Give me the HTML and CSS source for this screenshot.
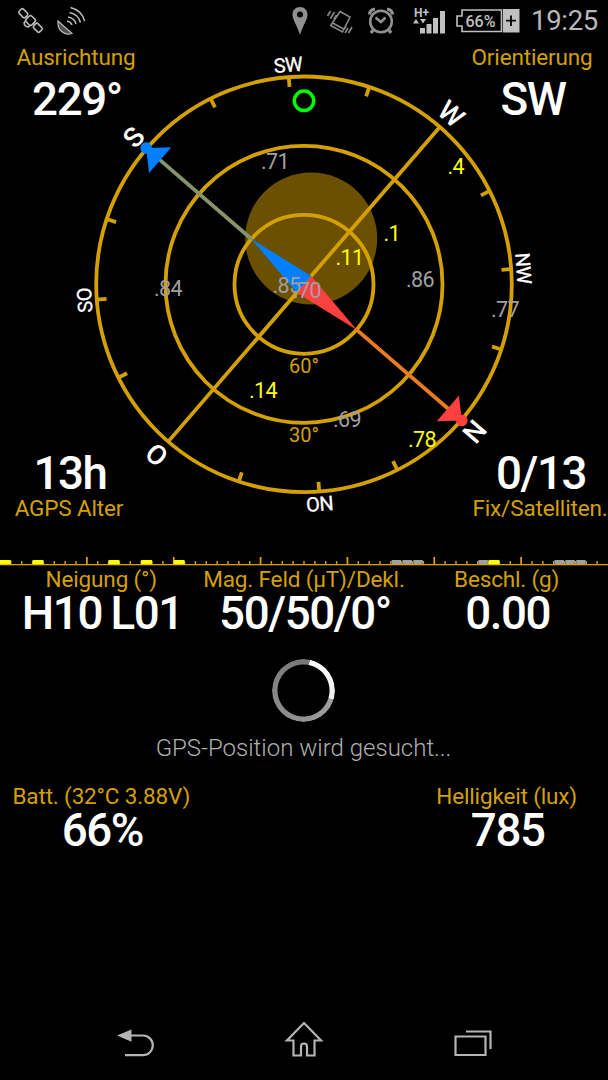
FILE: index.html
```html
<!DOCTYPE html>
<html lang="de">
<head>
    <meta charset="UTF-8">
    <meta name="viewport" content="width=device-width, initial-scale=1.0">
    <title>GPS Status</title>
    <link rel="stylesheet" href="styles.css">
</head>
<body>
    <div class="screen">
        <header class="status-bar">
            <div class="status-left">
                <svg class="line-icon" width="26" height="26" viewBox="0 0 26 26">
                    <g transform="translate(12.500 12.500) rotate(45)">
                        <rect x="-14.500" y="-3" width="8.500" height="6" rx="1.5"/>
                        <rect x="6" y="-3" width="8.500" height="6" rx="1.5"/>
                        <rect x="-4" y="-4" width="8" height="8" rx="2"/>
                        <path d="M-6 0h2M4 0h2M-3 4v2q3 3 6 0v-2"/>
                    </g>
                </svg>
                <svg class="line-icon" width="30" height="30" viewBox="0 0 30 30">
                    <path class="dish" d="M2 15L16 27.500C8 30 1 24 2 15z"/>
                    <path d="M11 15q4 1 5 4M12 11q6.500 1 8 7M13.500 6.500q9 2 11 10M14.500 1.500q11.500 3 14 13.500"/>
                </svg>
            </div>
            <div class="status-right">
                <svg width="16" height="28" viewBox="0 0 16 28">
                    <path class="pin" fill-rule="evenodd" d="M8 0C3.500 0 .5 3.300 .5 7.500C.5 13 5 18 8 28C11 18 15.500 13 15.500 7.500C15.500 3.300 12.500 0 8 0zM8 4.500a3 3 0 1 1 0 6a3 3 0 1 1 0-6z"/>
                </svg>
                <svg class="line-icon dim" width="26" height="26" viewBox="0 0 26 26">
                    <path d="M13 3.500L23 9L15.500 24L3.700 17.500zM5.200 14.800L17 21.200M.5 8L3.500 3M3.500 10.500L7.500 4M6.800 11.500L9.500 7M18 25L21 20M21.500 25L25 19M17.500 21L19 18"/>
                </svg>
                <svg class="alarm" width="28" height="28" viewBox="0 0 28 28">
                    <circle cx="14" cy="14.500" r="10.800"/>
                    <path d="M8.500 10.500L14 15L18.500 10.500"/>
                    <path class="alarm-heavy" d="M2.500 7.500Q3 2.500 8 2M25.500 7.500Q25 2.500 20 2M6 23L4 26M22 23L24 26"/>
                </svg>
                <svg class="signal" width="33" height="28" viewBox="0 0 33 28">
                    <text x="1" y="9.500" textLength="15">H+</text>
                    <path d="M0 16.500L3 12L6 16.500zM7 12H13L10 16.500zM7 21h5v5.500H7zM13.500 17h5v9.500h-5zM20 11h5v15.500h-5zM27 4h5v22.500h-5z"/>
                </svg>
                <svg class="battery" width="66" height="26" viewBox="0 0 66 26">
                    <path class="battery-case" d="M7 2H46.500V23.500H7V18H2V8H7z"/>
                    <rect x="48" y="1" width="16.500" height="23.500"/>
                    <path class="battery-plus" d="M51 12.700h10M56 7.500v10.500"/>
                    <text x="10.500" y="19" textLength="30">66%</text>
                </svg>
                <span class="clock">19:25</span>
            </div>
        </header>

        <main class="content">
            <section class="compass">
                <svg class="dial" width="608" height="512" viewBox="0 44 608 512">
                    <circle class="level-bubble" cx="311.200" cy="238.500" r="66"/>
                    <g transform="translate(304 284.300)">
                        <g class="rings">
                            <circle r="69.500"/>
                            <circle r="138.500"/>
                            <circle r="207.800"/>
                        </g>
                        <circle class="target" cy="-183.500" r="9.700"/>
                        <!-- heading 229, so north sits at 131 degrees -->
                        <g transform="rotate(130.800)">
                            <path class="rings" d="M-207.500 0H207.500"/>
                            <g class="rings" id="ticks"></g>
                            <path class="beam-north" d="M0 -69V-192"/>
                            <path class="beam-south" d="M0 69V192"/>
                            <path class="north" d="M-11 0L0 -70L11 0zM0 -208.500L-17 -190H17z"/>
                            <circle class="north" cy="-208.500" r="5.800"/>
                            <path class="south" d="M-11 0L0 70L11 0zM0 208.500L-17 190H17z"/>
                            <circle class="south" cy="208.500" r="5.800"/>
                            <g class="cardinals">
                                <text y="-215.500">N</text>
                                <text y="-215.500" transform="rotate(90)">O</text>
                                <text y="-215.500" transform="rotate(180)">S</text>
                                <text y="-215.500" transform="rotate(270)">W</text>
                            </g>
                            <g class="intercardinals">
                                <text y="-213" transform="rotate(45)">NO</text>
                                <text y="-213" transform="rotate(135)">SO</text>
                                <text y="-213" transform="rotate(225)">SW</text>
                                <text y="-213" transform="rotate(315)">NW</text>
                            </g>
                        </g>
                    </g>
                    <g class="elevations">
                        <text x="304" y="373">60°</text>
                        <text x="304" y="442">30°</text>
                    </g>
                    <g class="satellites">
                        <text x="261" y="169">.71</text>
                        <text x="154" y="295.500">.84</text>
                        <text x="406" y="286.500">.86</text>
                        <text x="272.500" y="292.500">.85</text>
                        <text x="293" y="298">.70</text>
                        <text x="491" y="317">.77</text>
                        <text x="333" y="427">.69</text>
                        <g class="used">
                            <text x="447.500" y="174">.4</text>
                            <text x="383.500" y="241">.1</text>
                            <text x="335.500" y="264.500">.11</text>
                            <text x="249" y="398">.14</text>
                            <text x="408" y="447">.78</text>
                        </g>
                    </g>
                </svg>
                <div class="corner top-left">
                    <span class="label">Ausrichtung</span>
                    <span class="value">229°</span>
                </div>
                <div class="corner top-right">
                    <span class="label">Orientierung</span>
                    <span class="value">SW</span>
                </div>
                <div class="corner bottom-left">
                    <span class="value">13h</span>
                    <span class="label">AGPS Alter</span>
                </div>
                <div class="corner bottom-right">
                    <span class="value">0/13</span>
                    <span class="label">Fix/Satelliten.</span>
                </div>
            </section>

            <svg class="sat-scale" id="satScale" width="608" height="10" viewBox="0 0 608 10"></svg>

            <section class="readings">
                <div class="reading">
                    <span class="label">Neigung (°)</span>
                    <span class="value">H10 L01</span>
                </div>
                <div class="reading">
                    <span class="label">Mag. Feld (μT)/Dekl.</span>
                    <span class="value">50/50/0°</span>
                </div>
                <div class="reading">
                    <span class="label">Beschl. (g)</span>
                    <span class="value">0.00</span>
                </div>
            </section>

            <section class="searching">
                <div class="spinner"></div>
                <p>GPS-Position wird gesucht...</p>
            </section>

            <section class="readings">
                <div class="reading">
                    <span class="label">Batt. (32°C 3.88V)</span>
                    <span class="value">66%</span>
                </div>
                <div class="reading"></div>
                <div class="reading">
                    <span class="label">Helligkeit (lux)</span>
                    <span class="value">785</span>
                </div>
            </section>
        </main>

        <nav class="nav-bar">
            <svg width="40" height="36" viewBox="0 0 40 36">
                <path class="nav-fill" d="M2 12.500L16.500 6.500V18.700z"/>
                <path d="M16 12.500H28a9.800 9.800 0 0 1 0 19.600H10"/>
            </svg>
            <svg width="40" height="38" viewBox="0 0 40 38">
                <path d="M20 1L3 18.500H9.500V33.500H17V24.500a3 3 0 0 1 6 0V33.500H30.500V18.500H37z"/>
            </svg>
            <svg width="40" height="36" viewBox="0 0 40 36">
                <path d="M2.500 13.500H32.500V32H2.500zM13 8.500H37.500V26"/>
            </svg>
        </nav>
    </div>

    <script>
        const SVG_NS = 'http://www.w3.org/2000/svg';
        const add = (parent, tag, attrs) => {
            const el = document.createElementNS(SVG_NS, tag);
            Object.keys(attrs).forEach(key => el.setAttribute(key, attrs[key]));
            parent.appendChild(el);
        };

        const ticks = document.getElementById('ticks');
        for (let i = 0; i < 16; i++) {
            if (i % 4 === 0) continue;
            add(ticks, 'path', { d: 'M0 -198V-208', transform: `rotate(${i * 22.5})` });
        }

        // One cell per satellite id, 56 cells over the full width
        const scale = document.getElementById('satScale');
        const cell = 608 / 56;
        for (let i = 1; i < 56; i++) {
            const major = i % 8 === 0;
            add(scale, 'rect', {
                class: 'scale-line',
                x: i * cell - (major ? 0.9 : 0.7),
                y: major ? 1 : 5,
                width: major ? 1.8 : 1.4,
                height: major ? 7 : 3
            });
        }
        add(scale, 'rect', { class: 'scale-line', x: 0, y: 8, width: 608, height: 1.3 });
        const received = [0, 3, 10, 13, 16, 45];
        const weak = [36, 37, 38, 44, 51, 52, 53];
        received.forEach(id => add(scale, 'rect', { class: 'sat-on', x: id * cell, y: 4, width: 10.8, height: 4.3 }));
        weak.forEach(id => add(scale, 'rect', { class: 'sat-off', x: id * cell + 0.8, y: 4, width: 9.4, height: 4 }));
    </script>
</body>
</html>
```
FILE: styles.css
```css
:root {
    --gold: #d4a000;
    --status: #b8b8b8;
    --muted: #a0a0a0;
    --blue: #0080ff;
    --red: #ff4040;
}
body {
    margin: 0;
    background: #000;
    font-family: Roboto, "Liberation Sans", sans-serif;
}
.screen {
    display: flex;
    flex-direction: column;
    width: 608px;
    height: 1080px;
    overflow: hidden;
    background: #000;
}
.status-bar {
    display: flex;
    justify-content: space-between;
    align-items: center;
    box-sizing: border-box;
    height: 44px;
    padding: 0 10px 2px 18px;
}
.status-left,
.status-right {
    display: flex;
    align-items: center;
}
.status-left {
    gap: 12px;
}
.line-icon {
    fill: none;
    stroke: var(--status);
    stroke-width: 1.6;
    overflow: visible;
}
.line-icon.dim {
    stroke: #888;
    margin-left: 19px;
}
.dish {
    fill: #505050;
    stroke-width: 1.2;
}
.pin {
    fill: #909090;
}
.alarm {
    margin-left: 14px;
    fill: none;
    stroke: #909090;
    stroke-width: 2.6;
}
.alarm-heavy {
    stroke-width: 3.2;
}
.signal {
    margin-left: 18px;
    overflow: visible;
    fill: #c0c0c0;
    font-size: 12px;
    font-weight: 700;
}
.battery {
    margin-left: 9px;
    fill: #c0c0c0;
    font-size: 16px;
    font-weight: 500;
}
.battery-case {
    fill: none;
    stroke: #c0c0c0;
    stroke-width: 1.6;
}
.battery-plus {
    stroke: #000;
    stroke-width: 1.8;
}
.clock {
    margin-left: 10px;
    color: var(--status);
    font-size: 27.5px;
    line-height: 32px;
    letter-spacing: -0.3px;
}
.content {
    display: flex;
    flex-direction: column;
    flex: 1;
}
.compass {
    display: grid;
    grid-template-columns: 1fr 1fr;
    grid-template-rows: 1fr 1fr;
    height: 512px;
}
.dial {
    grid-area: 1 / 1 / 3 / 3;
}
.corner {
    display: flex;
    flex-direction: column;
    align-items: center;
}
.top-left {
    grid-area: 1 / 1;
    place-self: start;
    width: 152px;
}
.top-right {
    grid-area: 1 / 2;
    place-self: start end;
    width: 152px;
}
.bottom-left {
    grid-area: 2 / 1;
    place-self: end start;
    width: 138px;
    padding-bottom: 35px;
}
.bottom-right {
    grid-area: 2 / 2;
    place-self: end;
    width: 136px;
    padding-bottom: 35px;
}
.top-left .value,
.top-right .value {
    margin-top: 8px;
}
.label {
    color: var(--gold);
    font-size: 22.5px;
    line-height: 26px;
    letter-spacing: -0.15px;
    white-space: nowrap;
}
.value {
    padding: 1px 0 0 2px;
    color: #fff;
    font-size: 45.7px;
    font-weight: 500;
    line-height: 42px;
    letter-spacing: -1.4px;
    word-spacing: -1.5px;
    white-space: nowrap;
}
.level-bubble {
    fill: #6a5000;
}
.rings {
    fill: none;
    stroke: var(--gold);
    stroke-width: 3.8;
}
.target {
    fill: none;
    stroke: #0f0;
    stroke-width: 3.5;
}
.north {
    fill: var(--red);
}
.south {
    fill: var(--blue);
}
.beam-north {
    stroke: #ea7b20;
    stroke-width: 3.8;
}
.beam-south {
    stroke: #86946a;
    stroke-width: 3.8;
}
.cardinals,
.intercardinals {
    fill: #fff;
    text-anchor: middle;
}
.cardinals {
    font-size: 27.5px;
    font-weight: 500;
}
.intercardinals {
    font-size: 20px;
    letter-spacing: -0.5px;
    stroke: #fff;
    stroke-width: 0.3;
}
.elevations {
    fill: var(--gold);
    font-size: 20px;
    text-anchor: middle;
}
.satellites {
    fill: var(--muted);
    font-size: 21.5px;
    letter-spacing: -0.6px;
}
.used {
    fill: #ff0;
}
.sat-scale {
    display: block;
}
.scale-line {
    fill: var(--gold);
}
.sat-on {
    fill: #ff0;
}
.sat-off {
    fill: #a0a0a0;
}
.readings {
    display: grid;
    grid-template-columns: repeat(3, 1fr);
    height: 69px;
}
.reading {
    display: flex;
    flex-direction: column;
    align-items: center;
}
.searching {
    display: flex;
    flex-direction: column;
    align-items: center;
    height: 148px;
    box-sizing: border-box;
    padding: 23.5px 1px 0 0;
}
.spinner {
    width: 63px;
    height: 63px;
    margin-right: 1px;
    border-radius: 50%;
    background: conic-gradient(#787878 12deg, #fff 12deg, #eee 107deg, #a0a0a0 107deg, #909090 200deg, #787878 360deg);
    -webkit-mask: radial-gradient(circle, transparent 25.5px, #000 26.5px);
    mask: radial-gradient(circle, transparent 25.5px, #000 26.5px);
}
.searching p {
    margin: 11px 0 0;
    color: #b0b0b0;
    font-size: 24px;
    font-weight: 300;
    line-height: 30px;
}
.nav-bar {
    display: flex;
    justify-content: space-between;
    align-items: center;
    box-sizing: border-box;
    height: 72px;
    padding: 0 115px 6px;
}
.nav-bar svg {
    fill: none;
    stroke: #b4b4b4;
    stroke-width: 2.2;
}
.nav-bar .nav-fill {
    fill: #b4b4b4;
    stroke: none;
}
```
